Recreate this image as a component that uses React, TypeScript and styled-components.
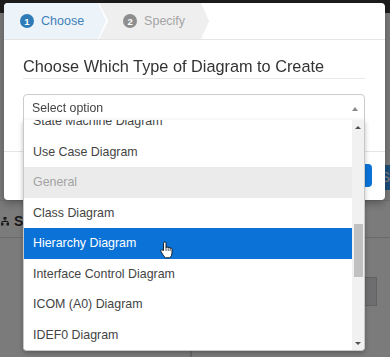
import styled, {createGlobalStyle} from 'styled-components'

const font = `"Liberation Sans", Arial, sans-serif`

const GlobalStyle = createGlobalStyle`
    html, body {
        margin: 0;
        padding: 0;
    }
    body {
        font-family: ${font};
        background: #f6f6f6;
        overflow: hidden;
    }
`

interface OptionItem {
    label: string;
    group?: boolean;
    selected?: boolean;
}

const options: OptionItem[] = [
    {label: 'State Machine Diagram'},
    {label: 'Use Case Diagram'},
    {label: 'General', group: true},
    {label: 'Class Diagram'},
    {label: 'Hierarchy Diagram', selected: true},
    {label: 'Interface Control Diagram'},
    {label: 'ICOM (A0) Diagram'},
    {label: 'IDEF0 Diagram'},
]

export default function App() {
    return (
        <>
            <GlobalStyle />
            <Page>
                <BgHeader />
                <BgActions>
                    <BgButton>S</BgButton>
                </BgActions>
                <BgToolbar>
                    <svg width="8" height="9" viewBox="0 0 8 9">
                        <rect x="2.5" y="0" width="3" height="2.5" fill="#333" />
                        <path d="M4 2.5V4.5M1 4.5H7M1 4.5V6M7 4.5V6" stroke="#333" strokeWidth="1" fill="none" />
                        <rect x="0" y="6" width="2.5" height="2.5" fill="#333" />
                        <rect x="5.5" y="6" width="2.5" height="2.5" fill="#333" />
                    </svg>
                    <BgLabel>St</BgLabel>
                </BgToolbar>
                <BgContent>
                    <BgPane />
                    <BgBox />
                </BgContent>
            </Page>
            <Overlay />
            <Modal>
                <Steps>
                    <Step $active>
                        <StepInner $active>
                            <Badge $active>1</Badge>
                            Choose
                        </StepInner>
                    </Step>
                    <Step>
                        <StepInner>
                            <Badge>2</Badge>
                            Specify
                        </StepInner>
                    </Step>
                </Steps>
                <Body>
                    <Title>Choose Which Type of Diagram to Create</Title>
                    <SelectWrap>
                        <SelectBox>
                            Select option
                            <Caret />
                        </SelectBox>
                        <Dropdown>
                            <Viewport>
                                <OptionList>
                                    {options.map(o => (
                                        <Option key={o.label} $group={o.group} $selected={o.selected}>
                                            {o.label}
                                        </Option>
                                    ))}
                                </OptionList>
                            </Viewport>
                            <Scrollbar>
                                <ScrollArrow><Arrow /></ScrollArrow>
                                <Track><Thumb /></Track>
                                <ScrollArrow><Arrow $down /></ScrollArrow>
                            </Scrollbar>
                        </Dropdown>
                    </SelectWrap>
                </Body>
                <Footer>
                    <PrimaryButton>Next</PrimaryButton>
                </Footer>
            </Modal>
            <Cursor width="14" height="18" viewBox="0 0 14 18">
                <path
                    d="M3.5 9.5V2.2Q3.5 1 4.75 1Q6 1 6 2.2V6.8Q6 6 7.1 6Q8.2 6 8.2 7Q8.2 6.4 9.2 6.4Q10.2 6.4 10.2 7.5Q10.3 7 11.1 7Q12 7 12 8.2V12Q12 15 9.8 16.8H5.5Q4 15.8 2.6 13.2L0.9 10.3Q0.4 9.3 1.3 8.9Q2.1 8.6 2.8 9.4Z"
                    fill="#fff" stroke="#111" strokeWidth="0.9" strokeLinejoin="round" />
                <path d="M6 7V10M8.2 7.2V10M10.2 7.6V10" stroke="#111" strokeWidth="0.7" />
            </Cursor>
        </>
    )
}

const Page = styled.div`
    width: 390px;
    height: 357px;
    display: flex;
    flex-direction: column;
    background: #f6f6f6;
`
const BgHeader = styled.div`
    height: 13px;
    background: #3a3a3a;
`
const BgActions = styled.div`
    height: 187px;
    display: flex;
    align-items: flex-end;
    justify-content: flex-end;
    padding-bottom: 10px;
    box-sizing: border-box;
`
const BgButton = styled.div`
    height: 25px;
    width: 28px;
    padding-left: 2px;
    box-sizing: border-box;
    background: #3a9cf4;
    color: #fff;
    font-size: 14px;
    line-height: 25px;
    border-radius: 3px 0 0 3px;
    text-align: right;
`
const BgToolbar = styled.div`
    height: 38px;
    display: flex;
    align-items: center;
    gap: 5px;
    padding: 4px 0 0 1px;
    box-sizing: border-box;
    border-top: 1px solid #e0e0e0;
    border-bottom: 1px solid #d6d6d6;
`
const BgLabel = styled.span`
    font-size: 14px;
    font-weight: bold;
    color: #333;
`
const BgContent = styled.div`
    flex: 1;
    display: flex;
    justify-content: space-between;
    padding-top: 39px;
`
const BgPane = styled.div`
    width: 190px;
    align-self: flex-end;
    height: 6px;
    border-right: 2px solid #cfcfcf;
    box-shadow: 8px 0 0 -6px #cfcfcf;
`
const BgBox = styled.div`
    width: 14px;
    height: 27px;
    margin-right: 13px;
    background: #dcdce0;
    border: 1px solid #c4c4c8;
`
const Overlay = styled.div`
    position: fixed;
    inset: 0;
    background: rgba(0, 0, 0, .5);
`
const Modal = styled.div`
    position: absolute;
    top: 3px;
    left: 4px;
    width: 381px;
    height: 197px;
    background: #fff;
    border-radius: 4px;
    box-shadow: 0 3px 9px rgba(0, 0, 0, .3);
    display: flex;
    flex-direction: column;
`
const Steps = styled.div`
    display: flex;
    height: 37px;
    border-bottom: 1px solid #e5e5e5;
    box-sizing: border-box;
    border-radius: 4px 4px 0 0;
    overflow: hidden;
`
const Step = styled.div<{$active?: boolean}>`
    position: relative;
    z-index: ${p => p.$active ? 2 : 1};
    margin-left: ${p => p.$active ? '0' : '-9px'};
    padding-right: 2px;
    background: #fff;
    clip-path: polygon(0 0, calc(100% - 9px) 0, 100% 50%, calc(100% - 9px) 100%, 0 100%);
`
const StepInner = styled.div<{$active?: boolean}>`
    height: 100%;
    display: flex;
    align-items: center;
    gap: 7px;
    box-sizing: border-box;
    padding: 0 ${p => p.$active ? '22px' : '24px'} 0 ${p => p.$active ? '16px' : '24px'};
    background: ${p => p.$active ? '#ecf3f9' : '#efefef'};
    color: ${p => p.$active ? '#3f80b8' : '#a4a4a4'};
    font-size: 12.5px;
    clip-path: polygon(0 0, calc(100% - 8px) 0, 100% 50%, calc(100% - 8px) 100%, 0 100%);
`
const Badge = styled.span<{$active?: boolean}>`
    width: 14px;
    height: 14px;
    border-radius: 50%;
    background: ${p => p.$active ? '#2d7cb8' : '#8e8e8e'};
    color: #fff;
    font-size: 9.5px;
    font-weight: bold;
    display: flex;
    align-items: center;
    justify-content: center;
`
const Body = styled.div`
    padding: 14px 20px 30px 19px;
    border-bottom: 1px solid #e5e5e5;
`
const Title = styled.h4`
    margin: 0;
    height: 24px;
    line-height: 24px;
    font-size: 16.3px;
    font-weight: normal;
    color: #333;
    white-space: nowrap;
    border-bottom: 1px solid #e8e8e8;
`
const SelectWrap = styled.div`
    position: relative;
    margin-top: 15px;
`
const SelectBox = styled.div`
    height: 27px;
    box-sizing: border-box;
    border: 1px solid #cccccc;
    border-radius: 4px 4px 0 0;
    display: flex;
    align-items: center;
    justify-content: space-between;
    padding: 0 6px 0 8px;
    font-size: 12.3px;
    color: #444;
`
const Caret = styled.span`
    width: 0;
    height: 0;
    border-left: 3.5px solid transparent;
    border-right: 3.5px solid transparent;
    border-bottom: 4px solid #888;
    margin-top: 2px;
`
const Dropdown = styled.div`
    position: absolute;
    z-index: 5;
    top: 26px;
    left: 0;
    right: 0;
    height: 231px;
    box-sizing: border-box;
    background: #fff;
    border: 1px solid #c8c8c8;
    border-top: none;
    border-radius: 0 0 4px 4px;
    box-shadow: 0 2px 5px rgba(0, 0, 0, .25);
    display: flex;
    overflow: hidden;
`
const Viewport = styled.div`
    flex: 1;
    overflow: hidden;
`
const OptionList = styled.ul`
    list-style: none;
    margin: -14px 0 0;
    padding: 0;
`
const Option = styled.li<{$group?: boolean; $selected?: boolean}>`
    height: 30.5px;
    line-height: 30.5px;
    padding-left: 9px;
    font-size: 12.4px;
    white-space: nowrap;
    color: ${p => p.$selected ? '#fff' : p.$group ? '#a3a3a3' : '#444'};
    background: ${p => p.$selected ? '#0b73d8' : p.$group ? '#ebebeb' : '#fff'};
`
const Scrollbar = styled.div`
    width: 12px;
    background: #f1f1f1;
    display: flex;
    flex-direction: column;
`
const ScrollArrow = styled.div`
    height: 14px;
    display: flex;
    align-items: center;
    justify-content: center;
`
const Arrow = styled.span<{$down?: boolean}>`
    width: 0;
    height: 0;
    border-left: 3px solid transparent;
    border-right: 3px solid transparent;
    ${p => p.$down ? 'border-top: 3px solid #505050;' : 'border-bottom: 3px solid #505050;'}
`
const Track = styled.div`
    flex: 1;
    padding-top: 90px;
`
const Thumb = styled.div`
    width: 9px;
    height: 53px;
    margin-left: 2px;
    background: #c1c1c1;
`
const Footer = styled.div`
    flex: 1;
    display: flex;
    justify-content: flex-end;
    padding: 12px 13px 0 0;
`
const PrimaryButton = styled.button`
    height: 23px;
    padding: 0 20px;
    border: none;
    border-radius: 4px;
    background: #0b73d8;
    color: #fff;
    font-family: ${font};
    font-size: 14px;
`
const Cursor = styled.svg`
    position: absolute;
    z-index: 10;
    left: 160px;
    top: 241px;
`
